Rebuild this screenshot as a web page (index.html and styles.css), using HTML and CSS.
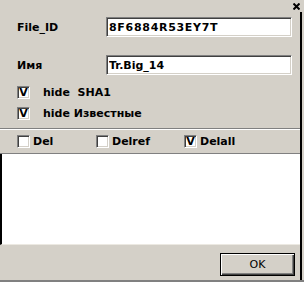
FILE: index.html
```html
<!DOCTYPE html>
<html>
	<head>
		<meta charset="UTF-8">
		<title>File_ID</title>
		<link rel="stylesheet" href="styles.css">
	</head>
	<body>
		<div class="dlg-top">
			<span class="dlg-close">
				<svg width="7" height="7" viewBox="0 0 7 7"><path d="M0.5 0.5L6.5 6.5M6.5 0.5L0.5 6.5" stroke="#000" stroke-width="2" fill="none"/></svg>
			</span>
		</div>
		<div class="dlg-panel">
			<div class="dlg-form">
				<div class="dlg-row">
					<label class="dlg-label">File_ID</label>
					<input class="dlg-input dlg-input-id" type="text" value="8F6884R53EY7T">
				</div>
				<div class="dlg-row dlg-row-2">
					<label class="dlg-label">Имя</label>
					<input class="dlg-input" type="text" value="Tr.Big_14">
				</div>
				<div class="dlg-checks">
					<div class="dlg-check"><span class="dlg-box dlg-box-on">V</span><span class="dlg-check-text">hide&nbsp; SHA1</span></div>
					<div class="dlg-check"><span class="dlg-box dlg-box-on">V</span><span class="dlg-check-text">hide Известные</span></div>
				</div>
			</div>
			<div class="dlg-sep"></div>
			<div class="dlg-dels">
				<div class="dlg-del dlg-del-1"><span class="dlg-box"></span>Del</div>
				<div class="dlg-del dlg-del-2"><span class="dlg-box"></span>Delref</div>
				<div class="dlg-del"><span class="dlg-box dlg-box-on">V</span>Delall</div>
			</div>
			<div class="dlg-list"></div>
			<div class="dlg-bottom">
				<button class="dlg-btn">OK</button>
			</div>
		</div>
		<div class="dlg-edge"></div>
	</body>
</html>
```

FILE: styles.css
```css
*{
	margin:0;
	padding:0;
	box-sizing:border-box;
}
html,body{
	width:304px;
	height:282px;
	overflow:hidden;
}
body{
	background:#d4d0c8;
	font-family:"DejaVu Sans",Tahoma,sans-serif;
	font-size:11px;
	font-weight:bold;
	color:#000;
}
.dlg-top{
	display:flex;
	justify-content:flex-end;
	height:12px;
	padding:3px 4px 0 0;
}
.dlg-close{
	display:block;
	width:7px;
	height:7px;
	line-height:0;
}
.dlg-panel{
	width:302px;
	height:268px;
	border-right:2px solid #000;
}
.dlg-form{
	padding:5px 8px 0 17px;
}
.dlg-row{
	display:flex;
	align-items:center;
	height:20px;
}
.dlg-row-2{
	margin-top:18px;
}
.dlg-label{
	width:89px;
}
.dlg-input{
	width:186px;
	height:20px;
	padding:0 0 0 2px;
	font:inherit;
	color:#000;
	background:#fff;
	border:1px solid;
	border-color:#808080 #fff #fff #808080;
	box-shadow:inset 1px 1px #404040,inset -1px -1px #d4d0c8;
	outline:none;
}
.dlg-input-id{
	letter-spacing:0.7px;
}
.dlg-checks{
	margin-top:7px;
}
.dlg-check{
	display:flex;
	align-items:center;
	height:21px;
}
.dlg-check-text{
	margin-left:13px;
}
.dlg-box{
	display:flex;
	align-items:center;
	justify-content:center;
	width:13px;
	height:13px;
	background:#fff;
	border:1px solid;
	border-color:#808080 #fff #fff #808080;
	box-shadow:inset 1px 1px #404040,inset -1px -1px #d4d0c8;
	font-size:11px;
	line-height:1;
}
.dlg-sep{
	margin-top:4px;
	height:2px;
	border-top:1px solid #808080;
	border-bottom:1px solid #fff;
}
.dlg-dels{
	display:flex;
	align-items:center;
	height:24px;
	padding-left:17px;
	border-bottom:1px solid #808080;
}
.dlg-del{
	display:flex;
	align-items:center;
	gap:3px;
}
.dlg-del-1{
	width:79px;
}
.dlg-del-2{
	width:88px;
}
.dlg-list{
	height:91px;
	background:#fff;
	border-left:2px solid #000;
	border-bottom:1px solid #ece9e2;
}
.dlg-bottom{
	display:flex;
	justify-content:flex-end;
	padding:8px 5px 0 0;
}
.dlg-btn{
	width:75px;
	height:23px;
	font-family:"DejaVu Sans",Tahoma,sans-serif;
	font-size:11px;
	font-weight:normal;
	color:#000;
	background:#d4d0c8;
	border:1px solid #000;
	box-shadow:inset 1px 1px #fff,inset -1px -1px #404040,inset -2px -2px #808080;
}
.dlg-edge{
	height:2px;
	background:#808080;
}
```
